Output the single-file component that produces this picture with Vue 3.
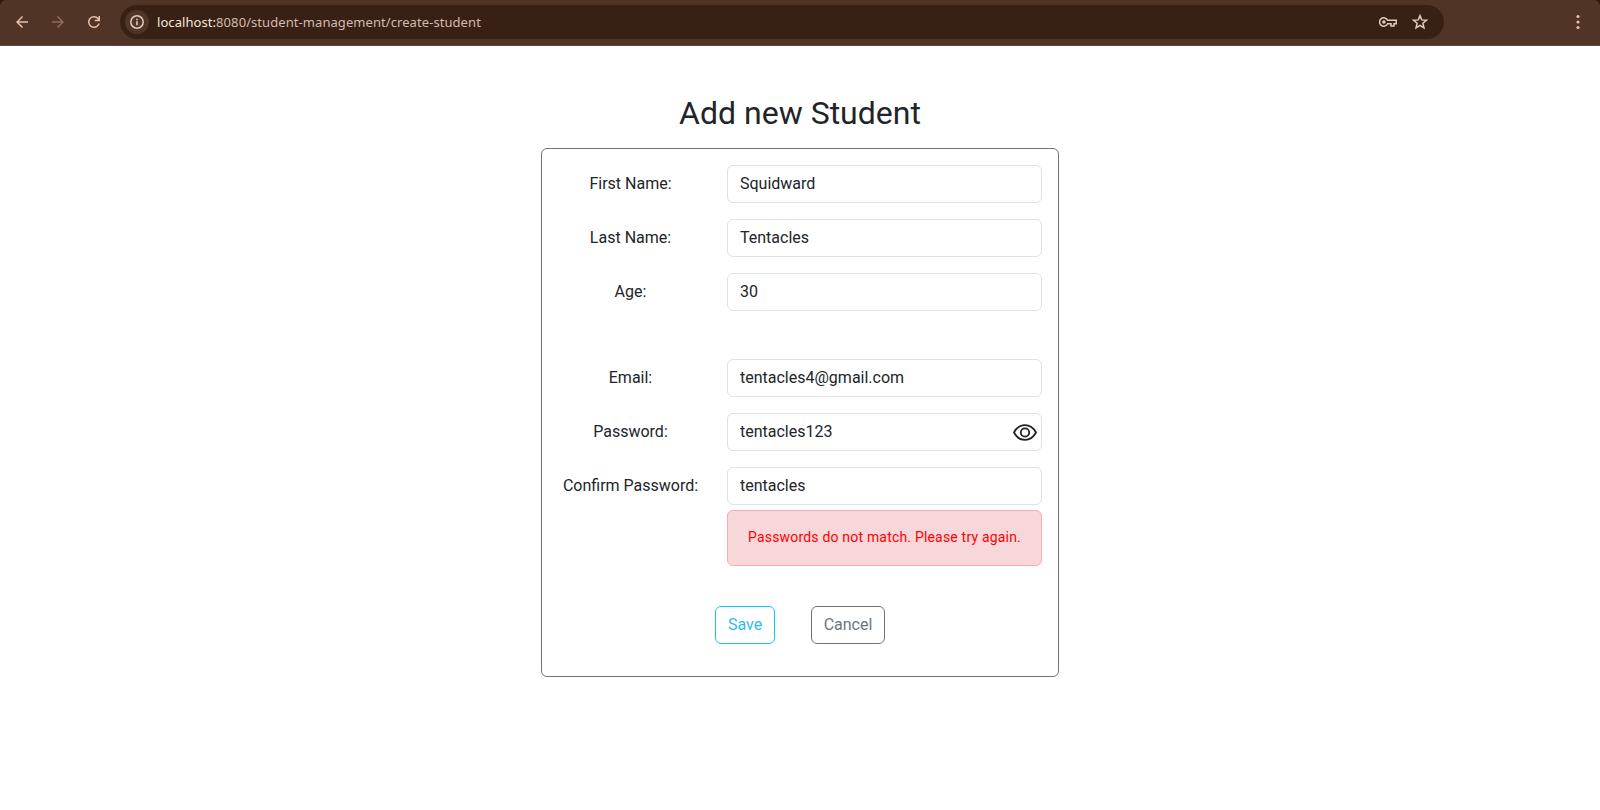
<script setup>
import { ref } from 'vue'

const fields = ref([
  { id: 'first', label: 'First Name:', value: 'Squidward' },
  { id: 'last', label: 'Last Name:', value: 'Tentacles' },
  { id: 'age', label: 'Age:', value: '30', gap: true },
  { id: 'email', label: 'Email:', value: 'tentacles4@gmail.com' },
  { id: 'password', label: 'Password:', value: 'tentacles123', eye: true },
  { id: 'confirm', label: 'Confirm Password:', value: 'tentacles', error: 'Passwords do not match. Please try again.' },
])
</script>

<template>
  <div class="window">
    <div class="frame">
      <header class="toolbar">
        <nav class="nav">
          <svg viewBox="0 0 24 24"><path d="M20 11H7.83l5.59-5.59L12 4l-8 8 8 8 1.41-1.41L7.83 13H20z" /></svg>
          <svg class="dim" viewBox="0 0 24 24"><path d="M4 11h12.17l-5.59-5.59L12 4l8 8-8 8-1.41-1.41L16.17 13H4z" /></svg>
          <svg viewBox="0 0 24 24"><path d="M12 20a7.7 7.7 0 0 1-5.68-2.33A7.7 7.7 0 0 1 4 12c0-2.23.77-4.13 2.32-5.68A7.7 7.7 0 0 1 12 4c1.15 0 2.25.24 3.3.71A7.7 7.7 0 0 1 18 6.75V4h2v7h-7V9h4.2A6 6 0 0 0 12 6a5.8 5.8 0 0 0-4.25 1.75A5.8 5.8 0 0 0 6 12c0 1.67.58 3.08 1.75 4.25A5.8 5.8 0 0 0 12 18a5.9 5.9 0 0 0 3.47-1.1A5.9 5.9 0 0 0 17.65 14h2.1a7.8 7.8 0 0 1-2.85 4.33A7.7 7.7 0 0 1 12 20z" /></svg>
        </nav>
        <div class="address">
          <span class="info">
            <svg viewBox="0 0 16 16"><circle cx="8" cy="8" r="6.2" fill="none" stroke="currentColor" stroke-width="1.5" /><path d="M7.2 7.2h1.6v4.1H7.2zM7.2 4.7h1.6v1.6H7.2z" fill="currentColor" /></svg>
          </span>
          <span class="url"><b>localhost:</b>8080/student-management/create-student</span>
          <svg class="key" viewBox="0 0 18 12"><path fill="none" stroke="currentColor" stroke-width="1.5" d="M8.6 4.3A4.2 4.2 0 1 0 8.6 7.7H12V10H15V7.7H17.2V4.3Z" /><circle cx="4.9" cy="6" r="1.8" fill="currentColor" /></svg>
          <svg class="star" viewBox="0 0 16 16"><path fill="none" stroke="currentColor" stroke-width="1.5" d="M8 1.6 9.75 5.9 14.4 6.25 10.85 9.25 11.95 13.8 8 11.35 4.05 13.8 5.15 9.25 1.6 6.25 6.25 5.9Z" /></svg>
        </div>
        <svg class="menu" viewBox="0 0 4 16"><circle cx="2" cy="2.5" r="1.6" /><circle cx="2" cy="8" r="1.6" /><circle cx="2" cy="13.5" r="1.6" /></svg>
      </header>
    </div>

    <main>
      <h1>Add new Student</h1>
      <form class="card" @submit.prevent>
        <div v-for="f in fields" :key="f.id" class="row" :class="{ gap: f.gap }">
          <label :for="f.id">{{ f.label }}</label>
          <div class="control">
            <input :id="f.id" v-model="f.value" type="text" autocomplete="off" spellcheck="false" />
            <svg v-if="f.eye" class="eye" viewBox="0 0 24 17"><path d="M1 8.5C6.2-1.3 17.8-1.3 23 8.5 17.8 18.3 6.2 18.3 1 8.5Z" /><circle cx="12" cy="8.5" r="4.2" /></svg>
            <div v-if="f.error" class="alert">{{ f.error }}</div>
          </div>
        </div>
        <div class="actions">
          <button type="button" class="save">Save</button>
          <button type="button" class="cancel">Cancel</button>
        </div>
      </form>
    </main>
  </div>
</template>

<style>
body {
  margin: 0;
  background: #fff;
}
</style>

<style scoped>
.window {
  height: 810px;
  overflow: hidden;
  font: 16px/24px Roboto, sans-serif;
  color: #212529;
  background: #fff;
}
.window *,
.window {
  box-sizing: border-box;
}
.frame {
  background: #2b180e;
}
.toolbar {
  display: flex;
  align-items: center;
  height: 46px;
  padding: 0 20px 2px 13px;
  background: #503527;
  border-bottom: 1px solid #5c483d;
  border-radius: 6px 6px 0 0;
  color: #e8bfa9;
}
.nav {
  display: flex;
  gap: 18px;
  width: 107px;
}
.nav svg {
  width: 18px;
  height: 18px;
  flex: none;
  fill: currentColor;
}
.nav .dim {
  color: #8e6b5a;
}
.address {
  display: flex;
  align-items: center;
  width: 1324px;
  height: 34px;
  padding: 0 16px 0 5px;
  border-radius: 17px;
  background: #382114;
  color: #e0cbc0;
}
.info {
  display: grid;
  place-items: center;
  width: 24px;
  height: 24px;
  border-radius: 50%;
  background: #503527;
}
.info svg {
  width: 16px;
  height: 16px;
}
.url {
  flex: 1;
  margin-left: 8px;
  font: 13px/20px "Noto Sans", sans-serif;
  letter-spacing: 0.07px;
  color: #cfbbb0;
  white-space: nowrap;
}
.url b {
  font-weight: 400;
  color: #f5e6de;
}
.key {
  width: 18px;
  height: 12px;
  margin-right: 15px;
}
.star {
  width: 16px;
  height: 16px;
}
.menu {
  width: 4px;
  height: 16px;
  margin-left: auto;
  fill: currentColor;
}
h1 {
  margin: 0;
  padding: 48px 0 16px;
  font-size: 32px;
  font-weight: 400;
  line-height: 38px;
  text-align: center;
}
.card {
  width: 518px;
  height: 529px;
  margin: 0 auto;
  padding: 16px 16px 0 0;
  border: 1px solid #6c757d;
  border-radius: 6px;
}
.row {
  display: grid;
  grid-template-columns: 177px 315px;
  justify-content: space-between;
  margin-bottom: 16px;
}
.row.gap {
  margin-bottom: 48px;
}
label {
  padding-top: 7px;
  text-align: center;
}
.control {
  position: relative;
}
input {
  display: block;
  width: 100%;
  height: 38px;
  padding: 5px 12px 7px;
  border: 1px solid #dee2e6;
  border-radius: 6px;
  background: #fff;
  font: inherit;
  color: inherit;
  outline: none;
}
.eye {
  position: absolute;
  right: 5px;
  top: 11px;
  width: 24px;
  height: 17px;
  fill: none;
  stroke: #222;
  stroke-width: 1.8;
}
.alert {
  height: 56px;
  margin-top: 5px;
  padding: 15px 0;
  border: 1px solid #f1aeb5;
  border-radius: 6px;
  background: #f8d7da;
  font-size: 14px;
  line-height: 22px;
  letter-spacing: 0.19px;
  text-align: center;
  color: #f00;
}
.actions {
  display: flex;
  gap: 36px;
  margin: 40px 0 0 173px;
}
button {
  height: 38px;
  padding: 0;
  border: 1px solid;
  border-radius: 6px;
  background: none;
  font: inherit;
}
.save {
  width: 60px;
  border-color: #0dcaf0;
  color: #31bce6;
}
.cancel {
  width: 74px;
  border-color: #6c757d;
  color: #6c757d;
}
</style>
